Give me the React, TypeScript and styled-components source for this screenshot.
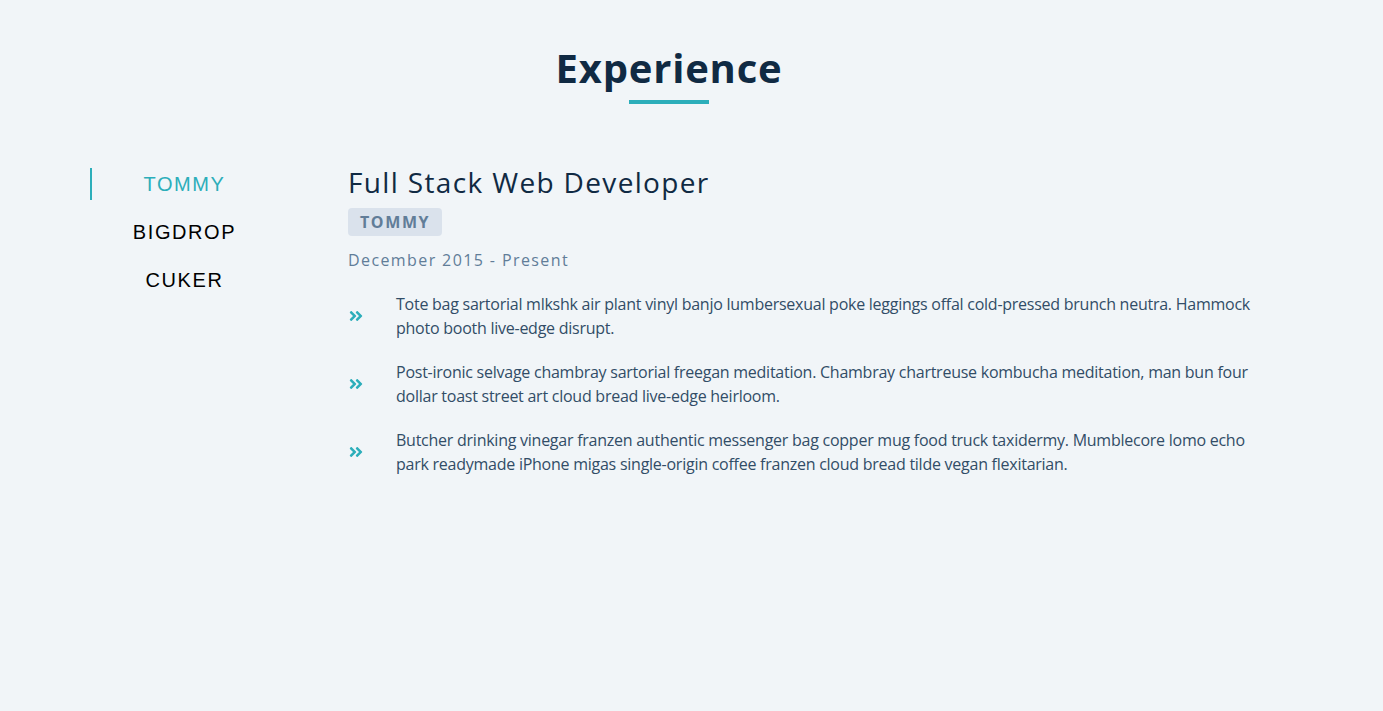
import styled, { createGlobalStyle } from "styled-components";
import { useState } from "react";
import { FaAngleDoubleRight } from "react-icons/fa";

interface Job {
  id: number;
  company: string;
  title: string;
  dates: string;
  duties: string[];
}

const jobs: Job[] = [
  {
    id: 1,
    company: "TOMMY",
    title: "Full Stack Web Developer",
    dates: "December 2015 - Present",
    duties: [
      "Tote bag sartorial mlkshk air plant vinyl banjo lumbersexual poke leggings offal cold-pressed brunch neutra. Hammock photo booth live-edge disrupt.",
      "Post-ironic selvage chambray sartorial freegan meditation. Chambray chartreuse kombucha meditation, man bun four dollar toast street art cloud bread live-edge heirloom.",
      "Butcher drinking vinegar franzen authentic messenger bag copper mug food truck taxidermy. Mumblecore lomo echo park readymade iPhone migas single-origin coffee franzen cloud bread tilde vegan flexitarian.",
    ],
  },
  {
    id: 2,
    company: "BIGDROP",
    title: "Front-End Engineer",
    dates: "May 2015 - December 2015",
    duties: [
      "Hashtag drinking vinegar scenester mumblecore snackwave four dollar toast, lumbersexual XOXO. Cardigan church-key pabst, biodiesel vexillologist viral squid.",
      "Franzen af pitchfork, mumblecore try-hard kogi XOXO roof party la croix cardigan neutra retro tattooed copper mug.",
    ],
  },
  {
    id: 3,
    company: "CUKER",
    title: "Engineering Intern",
    dates: "May 2014 - September 2015",
    duties: [
      "I'm baby woke mlkshk wolf bitters live-edge blue bottle, hammock freegan copper mug whatever cold-pressed.",
      "Pork belly tacos iPhone, small batch salvia retro hexagon enamel pin. Tbh hexagon aesthetic pop-up dreamcatcher.",
    ],
  },
];

const GlobalStyle = createGlobalStyle`
  * { box-sizing: border-box; }
  body {
    margin: 0;
    background: #f1f5f8;
    color: #102a43;
    font-family: "Open Sans", "Noto Sans", sans-serif;
  }
`;

const App = () => {
  const [value, setValue] = useState(0);
  const { title, dates, duties, company } = jobs[value];

  return (
    <>
      <GlobalStyle />
      <StSection>
        <StHeader>
          <h2>Experience</h2>
          <div className="underline" />
        </StHeader>
        <StJobs>
          <StBtnContainer>
            {jobs.map((job, index) => (
              <StJobBtn
                key={job.id}
                $active={index === value}
                onClick={() => setValue(index)}
              >
                {job.company}
              </StJobBtn>
            ))}
          </StBtnContainer>
          <StJobInfo>
            <h3>{title}</h3>
            <h4>{company}</h4>
            <p className="date">{dates}</p>
            {duties.map((duty, index) => (
              <StJobDesc key={index}>
                <FaAngleDoubleRight className="icon" />
                <p>{duty}</p>
              </StJobDesc>
            ))}
          </StJobInfo>
        </StJobs>
      </StSection>
    </>
  );
};

const StSection = styled.section`
  width: 1200px;
  margin: 48px 0 0 90px;
`;

const StHeader = styled.div`
  width: 1158px;
  text-align: center;
  margin-bottom: 64px;

  h2 {
    margin: 0 0 12px;
    font-size: 40px;
    line-height: 1;
    font-weight: 700;
    letter-spacing: 0.8px;
    color: #102a43;
  }
  .underline {
    width: 80px;
    height: 4px;
    margin: 0 auto;
    background: #2caeba;
  }
`;

const StJobs = styled.div`
  width: 1175px;
  display: grid;
  grid-template-columns: 187px 1fr;
  column-gap: 71px;
`;

const StBtnContainer = styled.div`
  display: flex;
  flex-direction: column;
`;

const StJobBtn = styled.button<{ $active: boolean }>`
  background: transparent;
  border: none;
  border-left: 2px solid ${({ $active }) => ($active ? "#2caeba" : "transparent")};
  color: ${({ $active }) => ($active ? "#2caeba" : "#000")};
  font-family: "Liberation Sans", Arial, sans-serif;
  font-size: 20px;
  line-height: 24px;
  letter-spacing: 1.6px;
  text-transform: uppercase;
  padding: 4px 0;
  margin-bottom: 16px;
  cursor: pointer;
`;

const StJobInfo = styled.article`
  h3 {
    margin: 0 0 12px;
    font-size: 28px;
    line-height: 1;
    font-weight: 400;
    letter-spacing: 1.35px;
    color: #102a43;
  }
  h4 {
    display: inline-block;
    margin: 0 0 12px;
    padding: 6px 12px;
    border-radius: 4px;
    background: #dae2ec;
    color: #617d98;
    font-size: 16px;
    line-height: 16px;
    font-weight: 700;
    letter-spacing: 1.6px;
  }
  .date {
    margin: 0 0 20px;
    color: #617d98;
    font-size: 16px;
    line-height: 24px;
    letter-spacing: 1.4px;
  }
`;

const StJobDesc = styled.div`
  display: grid;
  grid-template-columns: auto 1fr;
  column-gap: 32px;
  align-items: center;
  margin-bottom: 20px;

  .icon {
    color: #2caeba;
    width: 16px;
    height: 16px;
  }
  p {
    margin: 0;
    color: #324d67;
    font-size: 16px;
    line-height: 24px;
    letter-spacing: -0.25px;
  }
`;

export default App;
